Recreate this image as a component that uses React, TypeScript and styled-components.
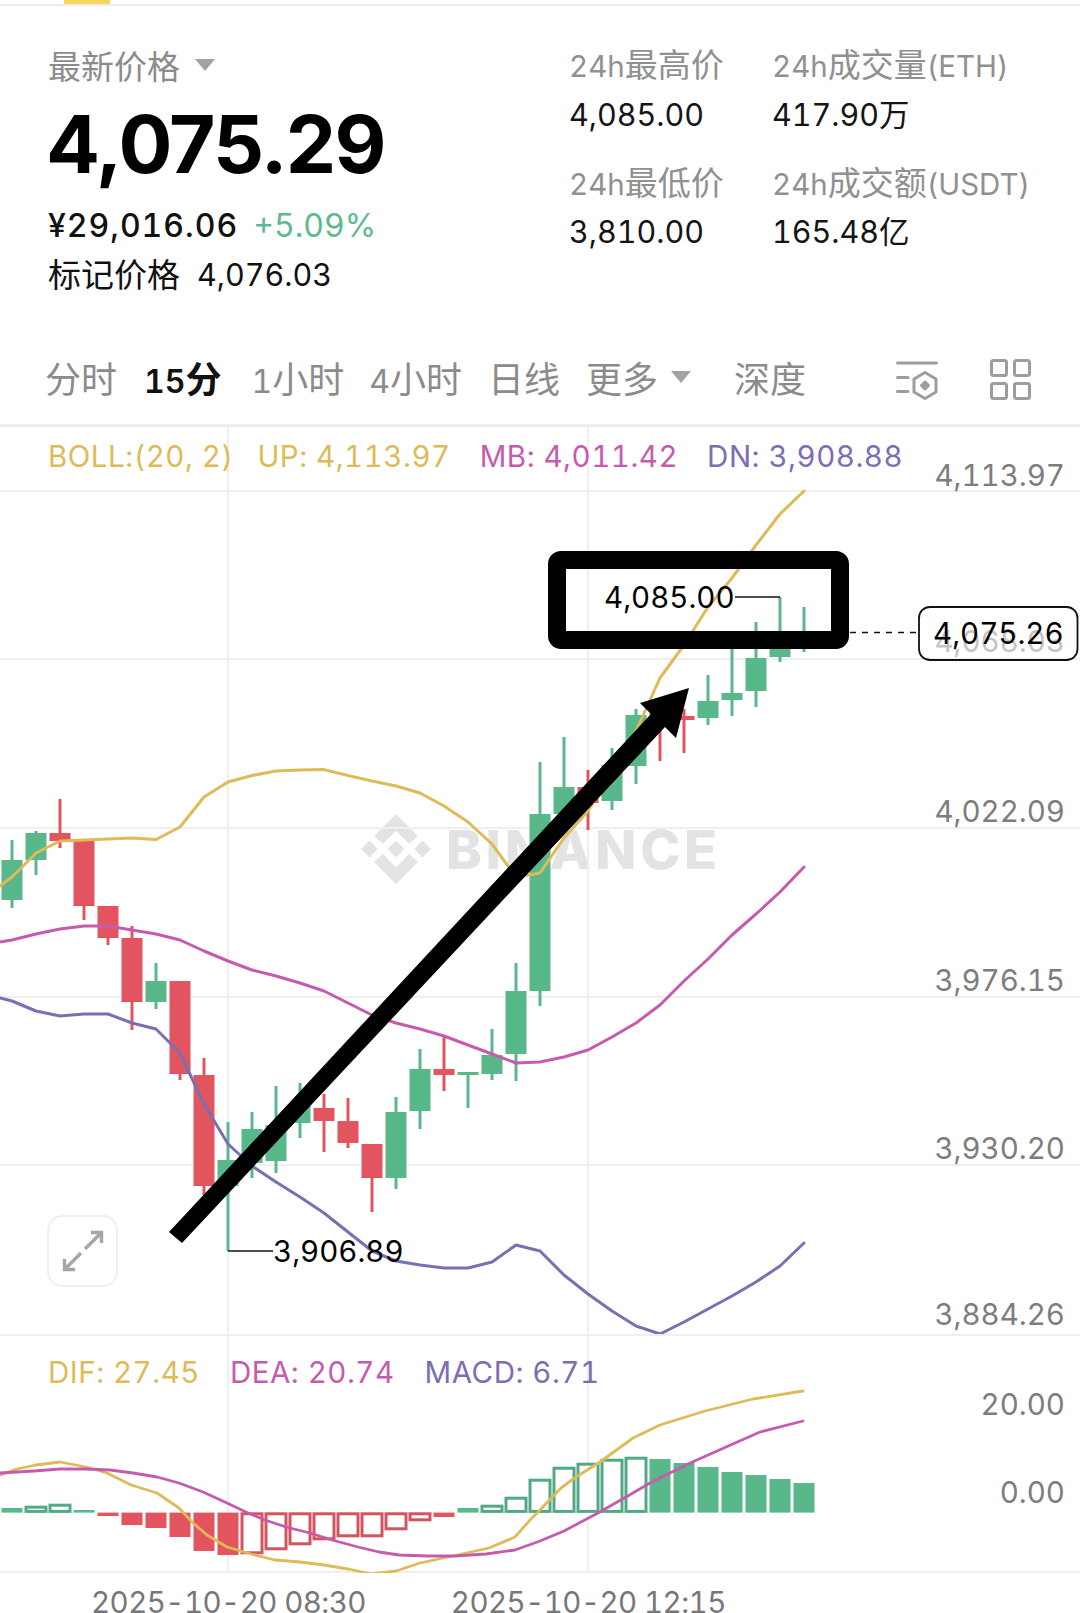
import * as React from "react";
import styled, { createGlobalStyle } from "styled-components";

const CJK = `"Noto Sans CJK SC"`;
const GREEN = "#58b88a";
const GREEN_DARK = "#52a983";
const RED = "#e2555f";
const RED_DARK = "#d2545e";
const YELLOW = "#deba58";
const PINK = "#c65bae";
const PURPLE = "#7c6eb3";
const GRID = "#efefef";

const GlobalStyle = createGlobalStyle`
  html, body {
    margin: 0;
    padding: 0;
    background: #ffffff;
  }
  body {
    font-family: Inter, ${CJK}, sans-serif;
    font-variant-numeric: tabular-nums;
  }
`;

const Page = styled.div`
  width: 1080px;
  height: 1613px;
  overflow: hidden;
  background: #fff;
`;

const TopStrip = styled.div`
  height: 4px;
  border-bottom: 2px solid #ececec;
`;

const ActiveMark = styled.div`
  width: 46px;
  height: 4px;
  margin-left: 64px;
  background: #f4d65f;
`;

const Header = styled.header`
  height: 324px;
  box-sizing: border-box;
  padding: 40px 0 0 48px;
  display: flex;
`;

const PriceBlock = styled.div`
  width: 522px;
`;

const PriceLabel = styled.div`
  display: flex;
  align-items: center;
  gap: 15px;
  height: 38px;
  font-family: ${CJK}, sans-serif;
  font-size: 33px;
  line-height: 38px;
  color: #8b8b8b;
`;

const Caret = styled.span<{ $w: number }>`
  width: 0;
  height: 0;
  border-left: ${(p) => p.$w}px solid transparent;
  border-right: ${(p) => p.$w}px solid transparent;
  border-top: ${(p) => p.$w + 2}px solid #a3a3a3;
`;

const BigPrice = styled.div`
  margin-top: 18px;
  margin-left: -2px;
  height: 84px;
  font-family: Inter, sans-serif;
  font-weight: 700;
  font-size: 80px;
  line-height: 84px;
  letter-spacing: -1.7px;
  font-variant-numeric: normal;
  color: #000;
`;

const FiatRow = styled.div`
  margin-top: 20px;
  display: flex;
  gap: 15px;
  height: 40px;
  font-size: 32px;
  line-height: 40px;
  font-weight: 500;
  letter-spacing: 1px;
  color: #111;
`;

const Change = styled.span`
  color: #5cba8f;
  font-weight: 400;
  letter-spacing: 0;
`;

const MarkRow = styled.div`
  margin-top: 9px;
  display: flex;
  gap: 17px;
  height: 40px;
  font-size: 33px;
  line-height: 40px;
  color: #111;
`;

const MarkValue = styled.span`
  font-size: 30.5px;
  font-weight: 400;
`;

const StatGrid = styled.div`
  display: grid;
  grid-template-columns: 203px auto;
  row-gap: 30px;
  align-content: start;
  margin-left: -1px;
`;

const StatLabel = styled.div`
  height: 38px;
  font-size: 33px;
  line-height: 38px;
  color: #909090;
  white-space: nowrap;
`;

const Latin = styled.span`
  font-size: 29.5px;
`;

const StatValue = styled.div`
  margin-top: 11.5px;
  height: 38px;
  font-size: 30.5px;
  line-height: 38px;
  color: #151515;
  white-space: nowrap;
`;

const Tabs = styled.nav`
  height: 97px;
  box-sizing: border-box;
  padding: 0 49px 0 45px;
  display: flex;
  align-items: center;
  border-bottom: 3px solid #eeeeee;
`;

const Tab = styled.span<{ $active?: boolean; $gap: number }>`
  margin-right: ${(p) => p.$gap}px;
  font-size: 36px;
  font-weight: ${(p) => (p.$active ? 600 : 400)};
  color: ${(p) => (p.$active ? "#111" : "#8b8b8b")};
  white-space: nowrap;
`;

const TabDigits = styled.span`
  font-size: 32px;
`;

const DepthTab = styled(Tab)`
  margin-left: 43px;
`;

const TabIcons = styled.div`
  margin-left: auto;
  padding-top: 5px;
  display: flex;
  gap: 52px;
  align-items: center;
`;

const MainPanel = styled.section`
  position: relative;
  height: 907px;
`;

const MacdPanel = styled.section`
  position: relative;
  height: 239px;
`;

const ChartSvg = styled.svg`
  display: block;
`;

const Legend = styled.div<{ $top: number; $gap: number }>`
  position: absolute;
  top: ${(p) => p.$top}px;
  left: 48px;
  display: flex;
  gap: ${(p) => p.$gap}px;
  font-family: Inter, sans-serif;
  font-size: 29.5px;
  line-height: 36px;
  letter-spacing: 0.5px;
  white-space: nowrap;
`;

const LegendItem = styled.span<{ $color: string; $pull?: number }>`
  color: ${(p) => p.$color};
  margin-right: ${(p) => -(p.$pull ?? 0)}px;
`;

const ExpandButton = styled.div`
  position: absolute;
  left: 47px;
  top: 788px;
  width: 71px;
  height: 72px;
  box-sizing: border-box;
  border: 2.5px solid #efefef;
  border-radius: 15px;
  display: flex;
  align-items: center;
  justify-content: center;
`;

const TimeAxis = styled.div`
  height: 40px;
  padding-left: 91px;
  display: flex;
  gap: 85px;
  overflow: hidden;
  border-top: 2px solid ${GRID};
  margin-top: -2px;
  font-family: Inter, sans-serif;
  font-size: 29.5px;
  line-height: 36px;
  letter-spacing: -0.55px;
  color: #777;
  white-space: nowrap;
`;

const TimeLabel = styled.span`
  margin-top: 11px;
`;

const AxisText = styled.text<{ $ghost?: boolean }>`
  font-family: Inter, sans-serif;
  font-size: 29.5px;
  fill: ${(p) => (p.$ghost ? "#c4c4c4" : "#7d7d7d")};
  text-anchor: end;
`;

const PriceNote = styled.text`
  font-family: Inter, sans-serif;
  font-size: 29.5px;
  fill: #000;
`;

const Watermark = styled.text`
  font-family: Inter, sans-serif;
  font-weight: 800;
  font-size: 54px;
  fill: #e3e3e3;
`;

type Candle = [number, number, number, number];

// wick top, body top, body bottom, wick bottom; first candle sits at x = 12, one every 24px
const candles: Candle[] = [
  [840, 860, 900, 908],
  [831, 833, 860, 875],
  [799, 833, 841, 848],
  [841, 841, 906, 920],
  [906, 906, 938, 945],
  [926, 938, 1002, 1030],
  [963, 981, 1002, 1009],
  [981, 981, 1074, 1080],
  [1058, 1075, 1186, 1195],
  [1122, 1160, 1186, 1251],
  [1112, 1129, 1163, 1178],
  [1086, 1125, 1161, 1173],
  [1083, 1105, 1123, 1138],
  [1094, 1108, 1121, 1152],
  [1098, 1121, 1143, 1148],
  [1144, 1144, 1178, 1212],
  [1097, 1112, 1178, 1189],
  [1049, 1069, 1111, 1129],
  [1037, 1069, 1075, 1091],
  [1072, 1072, 1075, 1108],
  [1029, 1055, 1074, 1080],
  [963, 991, 1054, 1081],
  [762, 814, 991, 1006],
  [737, 787, 814, 820],
  [770, 787, 803, 830],
  [748, 765, 801, 810],
  [709, 715, 766, 784],
  [700, 712, 720, 761],
  [709, 716, 720, 753],
  [675, 701, 718, 725],
  [649, 693, 700, 716],
  [622, 658, 691, 707],
  [597, 645, 657, 662],
  [607, 632, 648, 652],
];

const redCandles = [2, 3, 4, 5, 7, 8, 13, 14, 15, 18, 24, 27, 28];

const candleX = (i: number) => 12 + 24 * i;

const toPoints = (ys: number[]) => ys.map((y, i) => `${candleX(i)},${y}`).join(" ");

const bollUp = [877, 853, 841, 840, 839, 838, 839.5, 827, 797, 782, 775.5, 771, 770, 769.6, 775.5, 781, 786, 793, 806, 822, 844, 877, 873, 838, 811, 772, 731, 678, 645, 607, 578, 545, 514, 491];
const bollMid = [940, 934, 929, 926, 926, 930, 934, 940, 951, 961, 970, 976, 983, 991, 1003, 1015, 1023, 1029, 1036, 1045, 1054, 1063, 1062, 1057, 1050, 1037, 1023, 1005, 981, 959, 935, 914, 892, 867];
const bollLow = [1001, 1011, 1016, 1014, 1014, 1023, 1029, 1053, 1104, 1144, 1166, 1182, 1197, 1213, 1232, 1251, 1261, 1265, 1268, 1268, 1262, 1245, 1251, 1275, 1294, 1311, 1326, 1334, 1322, 1309, 1296, 1282, 1266, 1243];

// zero line of the histogram is at y = 1512.6; negative tops go below it
const histogram: { top: number; hollow?: boolean }[] = [
  { top: 1508 },
  { top: 1506, hollow: true },
  { top: 1504, hollow: true },
  { top: 1510 },
  { top: 1516 },
  { top: 1525 },
  { top: 1528 },
  { top: 1537 },
  { top: 1551 },
  { top: 1555 },
  { top: 1554, hollow: true },
  { top: 1550, hollow: true },
  { top: 1545, hollow: true },
  { top: 1540, hollow: true },
  { top: 1537, hollow: true },
  { top: 1537, hollow: true },
  { top: 1530, hollow: true },
  { top: 1521, hollow: true },
  { top: 1517 },
  { top: 1508 },
  { top: 1505, hollow: true },
  { top: 1497, hollow: true },
  { top: 1479, hollow: true },
  { top: 1467, hollow: true },
  { top: 1463, hollow: true },
  { top: 1459, hollow: true },
  { top: 1457, hollow: true },
  { top: 1459 },
  { top: 1463 },
  { top: 1467 },
  { top: 1472 },
  { top: 1475 },
  { top: 1479 },
  { top: 1483 },
];

const difLine = "0,1475 17,1469 36,1465 60,1462 86,1467 107,1473 131,1485 157,1493 179,1508 193,1523 207,1535 227,1547 251,1554 275,1560 300,1562 324,1565 348,1569 372,1574 396,1571 420,1563 448,1557 489,1548 515,1537 530,1520 540,1510 561,1488 576,1477 600,1462 633,1438 660,1425 705,1411 753,1399 803,1391";
const deaLine = "0,1473 34,1471 60,1469 86,1469 110,1470 133,1473 157,1477 179,1483 203,1492 227,1503 248,1513 265,1520 286,1527 310,1533 332,1540 358,1547 379,1552 399,1555 427,1556 455,1556 486,1554 515,1550 540,1541 564,1531 598,1513 626,1497 650,1483 688,1464 726,1447 760,1432 803,1421";

const mainGrid = [491, 659, 828, 997, 1165];
const axisLabels: [string, number][] = [
  ["4,113.97", 486],
  ["4,022.09", 822],
  ["3,976.15", 991],
  ["3,930.20", 1159],
  ["3,884.26", 1325],
];

const ZERO = 1512.6;

const ColumnsIcon = () => (
  <svg width="42" height="42" viewBox="0 0 42 42" fill="none" stroke="#9d9d9d" strokeWidth="3" strokeLinecap="round" strokeLinejoin="round">
    <path d="M1.5 4H40.5M1.5 18.5H12M1.5 32.5H12" />
    <path d="M29 13.5L40 20V33L29 39.5L18 33V20Z" />
    <path d="M29 23L32.5 26.5L29 30L25.5 26.5Z" fill="#9d9d9d" />
  </svg>
);

const GridIcon = () => (
  <svg width="41" height="41" viewBox="0 0 41 41" fill="none" stroke="#9d9d9d" strokeWidth="3" strokeLinejoin="round">
    <rect x="1.5" y="1.5" width="15" height="15" rx="2" />
    <rect x="24.5" y="1.5" width="15" height="15" rx="2" />
    <rect x="1.5" y="24.5" width="15" height="15" rx="2" />
    <rect x="24.5" y="24.5" width="15" height="15" rx="2" />
  </svg>
);

const ExpandIcon = () => (
  <svg width="44" height="44" viewBox="0 0 44 44" fill="none" stroke="#a6a6a6" strokeWidth="3.4">
    <path d="M24 20L40 4" />
    <path d="M30 3.5H40.5V14" />
    <path d="M20 24L4 40" />
    <path d="M14 40.5H3.5V30" />
  </svg>
);

const BinanceMark = () => (
  <g transform="translate(361 814) scale(0.7)" fill="#e3e3e3">
    <polygon points="50,38 62,50 50,62 38,50" />
    <polygon points="12,38 24,50 12,62 0,50" />
    <polygon points="88,38 100,50 88,62 76,50" />
    <polygon points="50,0 81,31 69,43 50,24 31,43 19,31" />
    <polygon points="50,100 81,69 69,57 50,76 31,57 19,69" />
  </g>
);

const MainChart = () => (
  <ChartSvg width="1080" height="907" viewBox="0 427 1080 907">
    <BinanceMark />
    <Watermark x="446" y="869" textLength="271">BINANCE</Watermark>
    {mainGrid.map((y) => (
      <line key={y} x1="0" x2="1080" y1={y} y2={y} stroke={GRID} strokeWidth="2" />
    ))}
    <line x1="228" x2="228" y1="427" y2="1334" stroke={GRID} strokeWidth="2" />
    <line x1="588" x2="588" y1="427" y2="1334" stroke={GRID} strokeWidth="2" />
    {candles.map(([wickTop, top, bottom, wickBottom], i) => {
      const color = redCandles.includes(i) ? RED : GREEN;
      return (
        <g key={i} fill={color}>
          <rect x={candleX(i) - 1.5} y={wickTop} width="3" height={wickBottom - wickTop} />
          <rect x={candleX(i) - 10.5} y={top} width="21" height={bottom - top} />
        </g>
      );
    })}
    <g fill="none" strokeWidth="3" strokeLinejoin="round" strokeLinecap="round">
      <polyline points={`0,886 ${toPoints(bollUp)}`} stroke={YELLOW} />
      <polyline points={`0,942 ${toPoints(bollMid)}`} stroke={PINK} />
      <polyline points={`0,998 ${toPoints(bollLow)}`} stroke={PURPLE} />
    </g>
    {axisLabels.map(([label, y]) => (
      <AxisText key={label} x="1065" y={y}>{label}</AxisText>
    ))}
    <AxisText $ghost x="1065" y="652">4,068.03</AxisText>
    <PriceNote x="604" y="608">4,085.00</PriceNote>
    <line x1="735" x2="780" y1="597" y2="597" stroke="#111" strokeWidth="1.5" />
    <PriceNote x="273" y="1262">3,906.89</PriceNote>
    <line x1="228" x2="273" y1="1251" y2="1251" stroke="#111" strokeWidth="1.5" />

    <line x1="850" x2="918" y1="632.5" y2="632.5" stroke="#111" strokeWidth="1.5" strokeDasharray="6 6" />
    <rect x="919" y="607" width="158.5" height="53" rx="11" fill="none" stroke="#111" strokeWidth="1.8" />
    <PriceNote x="933" y="644">4,075.26</PriceNote>

    <polygon points="169,1232 651,714 640,703 689,688 676,738 665,727 182,1243" fill="#000" />
    <rect x="557" y="560" width="283" height="80" rx="4" fill="none" stroke="#000" strokeWidth="18" />
  </ChartSvg>
);

const MacdChart = () => (
  <ChartSvg width="1080" height="239" viewBox="0 1334 1080 239">
    <line x1="0" x2="1080" y1="1335" y2="1335" stroke={GRID} strokeWidth="2" />
    <line x1="228" x2="228" y1="1334" y2="1572" stroke={GRID} strokeWidth="2" />
    <line x1="588" x2="588" y1="1334" y2="1572" stroke={GRID} strokeWidth="2" />
    {histogram.map(({ top, hollow }, i) => {
      const isRed = i >= 4 && i <= 18;
      const y = Math.min(top, ZERO);
      const h = Math.abs(top - ZERO);
      if (hollow) {
        return (
          <rect
            key={i}
            x={candleX(i) - 10}
            y={y + 1.2}
            width="20"
            height={Math.max(h - 2.4, 0)}
            fill="#fff"
            stroke={isRed ? RED_DARK : GREEN_DARK}
            strokeWidth="3"
          />
        );
      }
      return <rect key={i} x={candleX(i) - 10.5} y={y} width="21" height={h} fill={isRed ? RED : GREEN} />;
    })}
    <g fill="none" strokeWidth="2.8" strokeLinejoin="round" strokeLinecap="round">
      <polyline points={difLine} stroke={YELLOW} />
      <polyline points={deaLine} stroke={PINK} />
    </g>
    <AxisText x="1065" y="1415">20.00</AxisText>
    <AxisText x="1065" y="1503">0.00</AxisText>
  </ChartSvg>
);

export default function App() {
  return (
    <Page>
      <GlobalStyle />
      <TopStrip>
        <ActiveMark />
      </TopStrip>
      <Header>
        <PriceBlock>
          <PriceLabel>
            最新价格
            <Caret $w={10} />
          </PriceLabel>
          <BigPrice>4,075.29</BigPrice>
          <FiatRow>
            <span>¥29,016.06</span>
            <Change>+5.09%</Change>
          </FiatRow>
          <MarkRow>
            <span>标记价格</span>
            <MarkValue>4,076.03</MarkValue>
          </MarkRow>
        </PriceBlock>
        <StatGrid>
          <div>
            <StatLabel><Latin>24h</Latin>最高价</StatLabel>
            <StatValue>4,085.00</StatValue>
          </div>
          <div>
            <StatLabel><Latin>24h</Latin>成交量<Latin>(ETH)</Latin></StatLabel>
            <StatValue>417.90万</StatValue>
          </div>
          <div>
            <StatLabel><Latin>24h</Latin>最低价</StatLabel>
            <StatValue>3,810.00</StatValue>
          </div>
          <div>
            <StatLabel><Latin>24h</Latin>成交额<Latin>(USDT)</Latin></StatLabel>
            <StatValue>165.48亿</StatValue>
          </div>
        </StatGrid>
      </Header>
      <Tabs>
        <Tab $gap={27}>分时</Tab>
        <Tab $active $gap={30}><TabDigits>15</TabDigits>分</Tab>
        <Tab $gap={25}><TabDigits>1</TabDigits>小时</Tab>
        <Tab $gap={26}><TabDigits>4</TabDigits>小时</Tab>
        <Tab $gap={26}>日线</Tab>
        <Tab $gap={13}>更多</Tab>
        <Caret $w={10} />
        <DepthTab $gap={0}>深度</DepthTab>
        <TabIcons>
          <ColumnsIcon />
          <GridIcon />
        </TabIcons>
      </Tabs>
      <MainPanel>
        <MainChart />
        <Legend $top={11} $gap={29}>
          <LegendItem $color={YELLOW} $pull={5}>BOLL:(20, 2)</LegendItem>
          <LegendItem $color={YELLOW}>UP: 4,113.97</LegendItem>
          <LegendItem $color={PINK}>MB: 4,011.42</LegendItem>
          <LegendItem $color={PURPLE}>DN: 3,908.88</LegendItem>
        </Legend>
        <ExpandButton>
          <ExpandIcon />
        </ExpandButton>
      </MainPanel>
      <MacdPanel>
        <MacdChart />
        <Legend $top={20} $gap={30}>
          <LegendItem $color={YELLOW}>DIF: 27.45</LegendItem>
          <LegendItem $color={PINK}>DEA: 20.74</LegendItem>
          <LegendItem $color={PURPLE}>MACD: 6.71</LegendItem>
        </Legend>
      </MacdPanel>
      <TimeAxis>
        <TimeLabel>2025-10-20 08:30</TimeLabel>
        <TimeLabel>2025-10-20 12:15</TimeLabel>
      </TimeAxis>
    </Page>
  );
}
